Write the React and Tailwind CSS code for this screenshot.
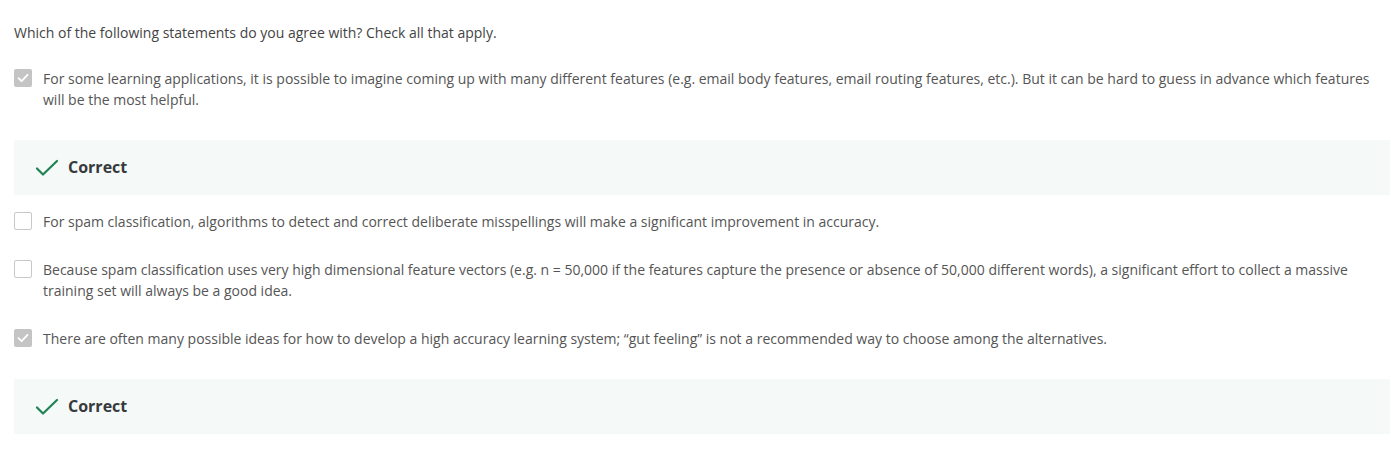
import { Check } from "lucide-react";

const options = [
  {
    text: "For some learning applications, it is possible to imagine coming up with many different features (e.g. email body features, email routing features, etc.). But it can be hard to guess in advance which features will be the most helpful.",
    checked: true,
  },
  {
    text: "For spam classification, algorithms to detect and correct deliberate misspellings will make a significant improvement in accuracy.",
    checked: false,
  },
  {
    text: "Because spam classification uses very high dimensional feature vectors (e.g. n = 50,000 if the features capture the presence or absence of 50,000 different words), a significant effort to collect a massive training set will always be a good idea.",
    checked: false,
  },
  {
    text: "There are often many possible ideas for how to develop a high accuracy learning system; \u201cgut feeling\u201d is not a recommended way to choose among the alternatives.",
    checked: true,
  },
];

function Box({ checked }) {
  if (checked) {
    return (
      <div className="mt-[1px] flex h-[18px] w-[18px] shrink-0 items-center justify-center rounded-[2px] bg-[#c4c4c4]">
        <svg width="12" height="10" viewBox="0 0 12 10" fill="none">
          <path d="M1.5 5.2 L4.6 8.2 L10.5 1.8" stroke="white" strokeWidth="1.8" strokeLinecap="round" strokeLinejoin="round" />
        </svg>
      </div>
    );
  }
  return <div className="mt-[1px] h-[18px] w-[18px] shrink-0 rounded-[2px] border-[1.5px] border-[#c8c8c8] bg-white" />;
}

function Feedback() {
  return (
    <div className="mt-[30px] mb-[16px] flex h-[55px] items-center bg-[#f5f9f8] pl-[21px]">
      <svg width="24" height="18" viewBox="0 0 24 18" fill="none" className="mr-[9px]">
        <path d="M2 9.5 L8 15.5 L22 2" stroke="#1f8354" strokeWidth="2.2" strokeLinecap="round" strokeLinejoin="round" />
      </svg>
      <span className="text-[16px] font-bold text-[#373a3c]">Correct</span>
    </div>
  );
}

export default function App() {
  return (
    <div className="min-h-screen bg-white pl-[14px] pr-[1px] pt-[22px] font-['Open_Sans',sans-serif] text-[14px] leading-[21px]">
      <p className="text-[#444444]">Which of the following statements do you agree with? Check all that apply.</p>
      <div className="mt-[25px]">
        {options.map((o, i) => (
          <div key={i}>
            <div className={"flex gap-[11px] " + (o.checked ? "" : "mb-[27px]")}>
              <Box checked={o.checked} />
              <p className="flex-1 pr-[8px] text-[#555555]">{o.text}</p>
            </div>
            {o.checked && <Feedback />}
          </div>
        ))}
      </div>
    </div>
  );
}
